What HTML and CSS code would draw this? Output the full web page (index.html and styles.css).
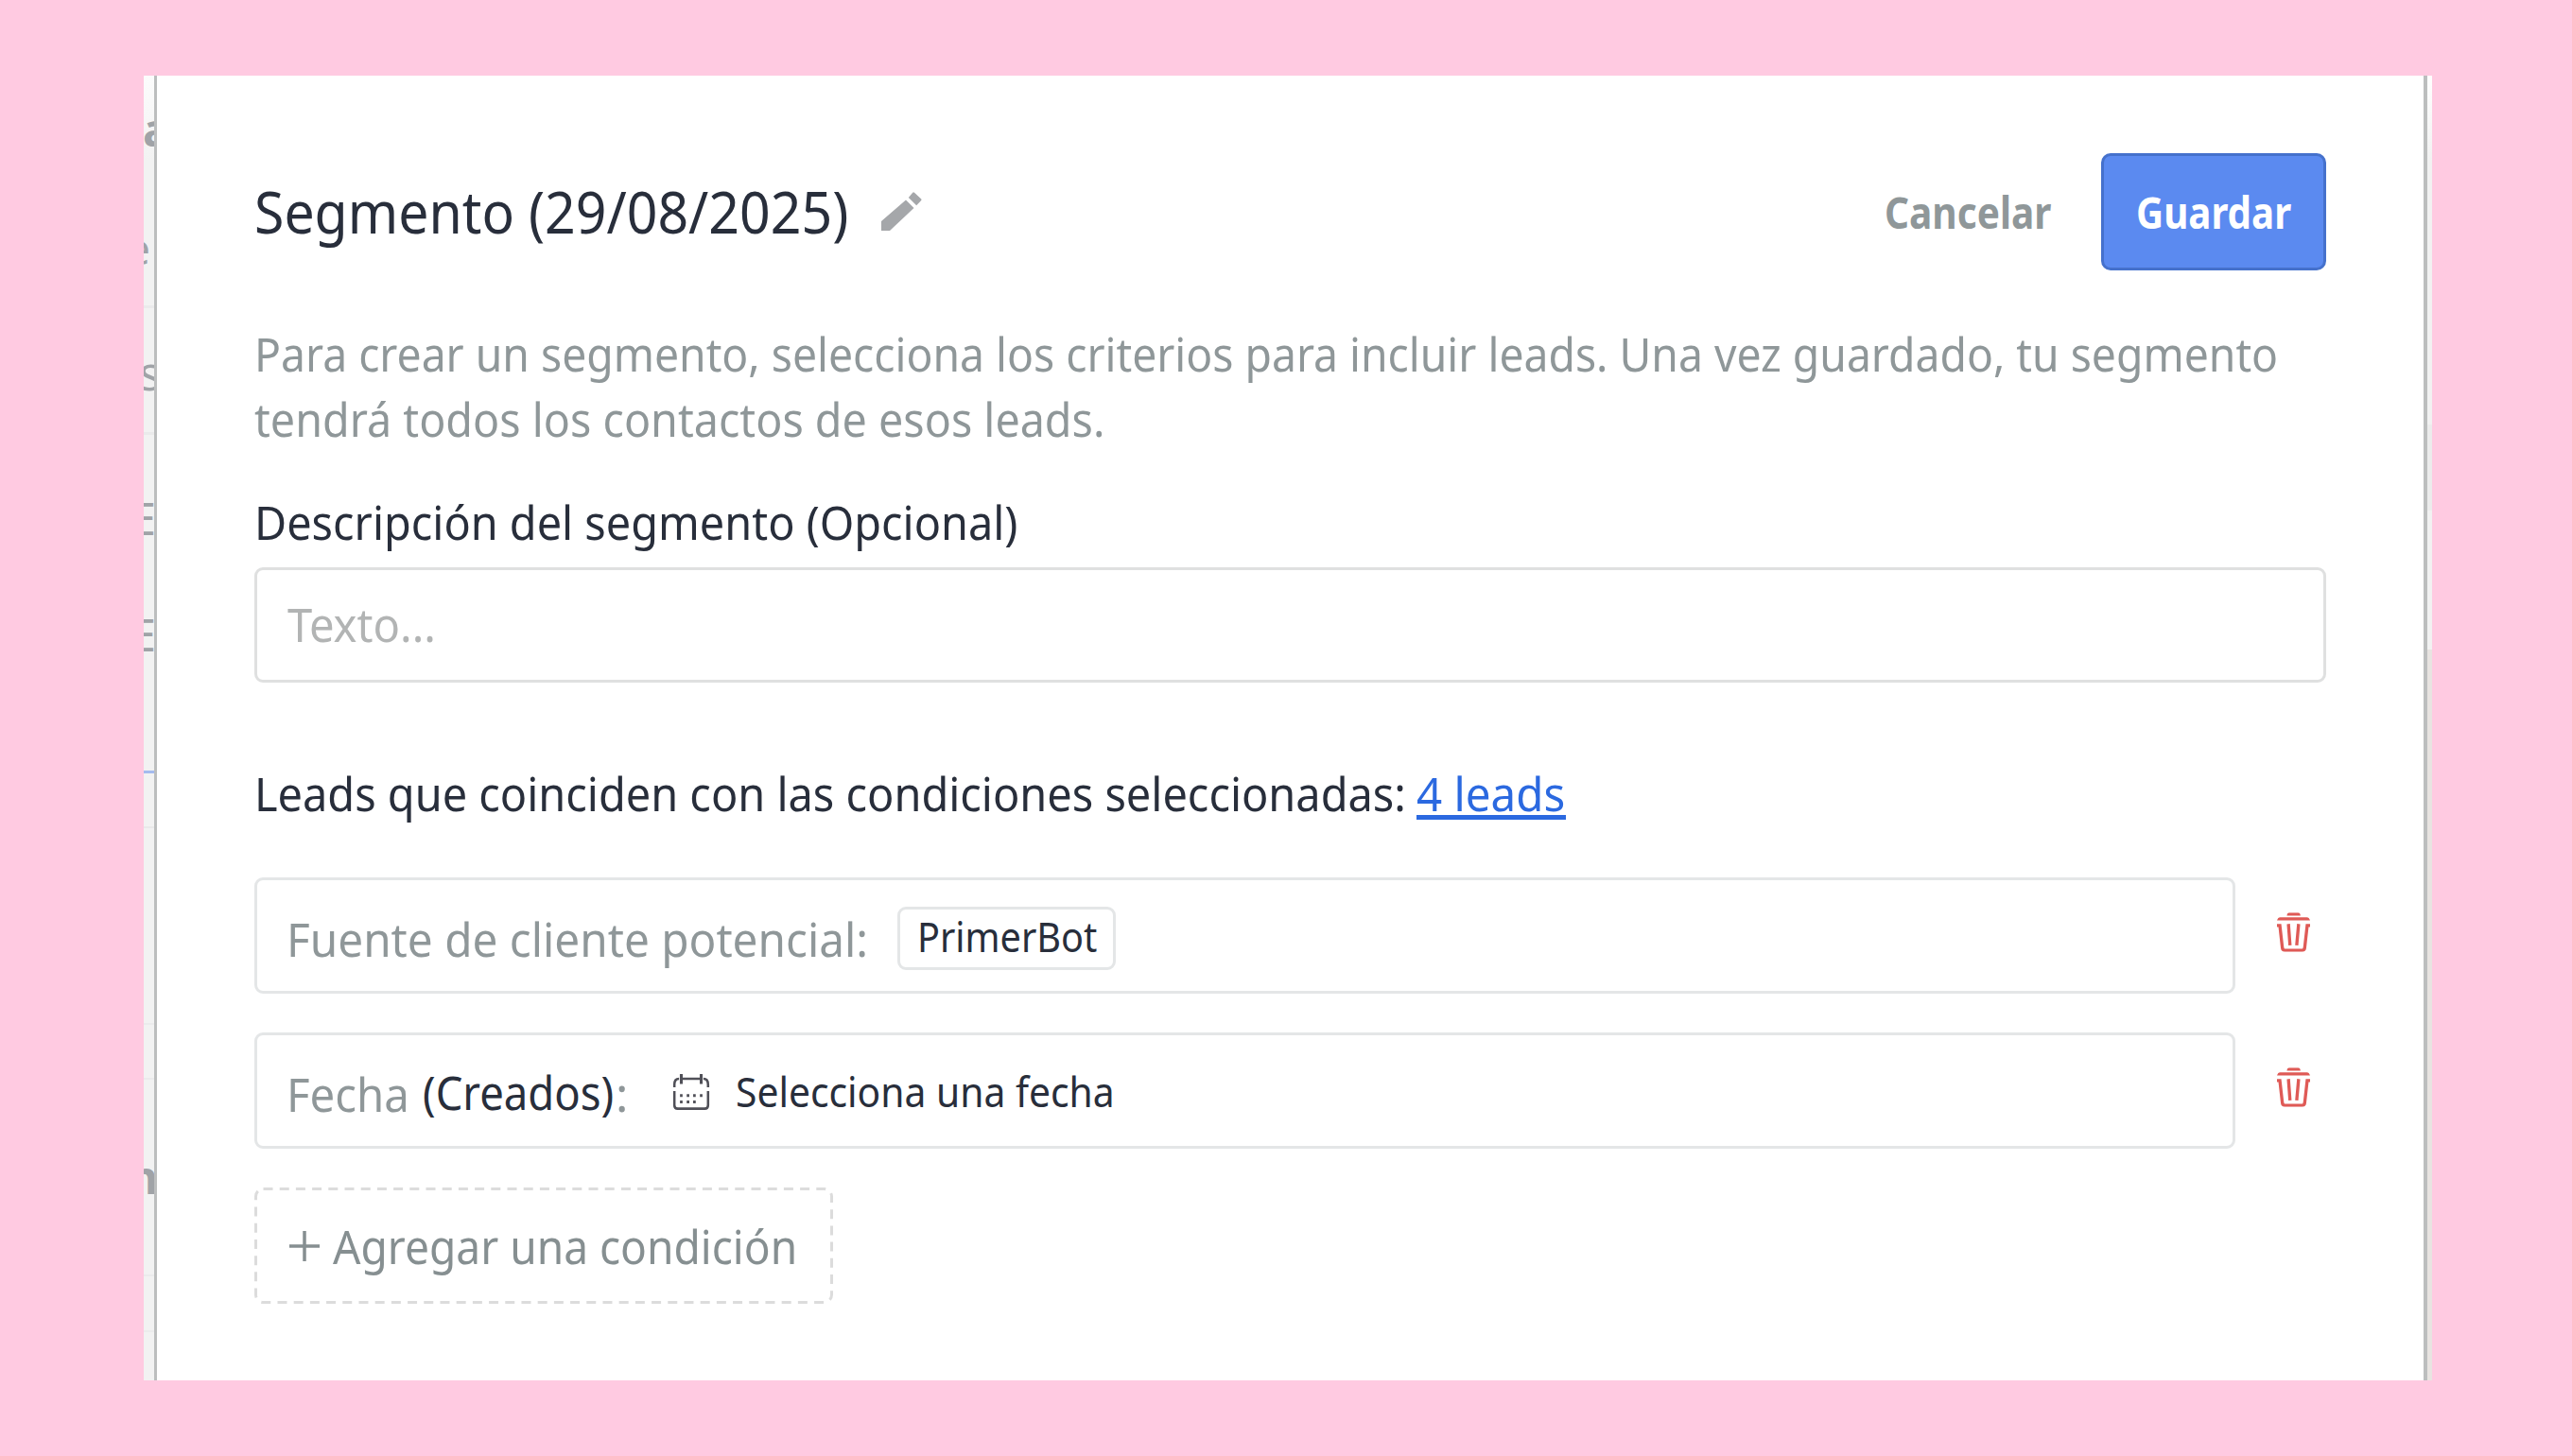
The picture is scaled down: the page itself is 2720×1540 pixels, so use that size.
FILE: index.html
```html
<!DOCTYPE html>
<html lang="es">
<head>
<meta charset="utf-8">
<title>Segmento</title>
<link rel="stylesheet" href="styles.css">
</head>
<body>
<div class="screen">
  <div class="backdrop backdrop-left">
    <span class="peek peek-a">a</span>
    <span class="peek peek-e">e</span>
    <span class="peek peek-s">s</span>
    <span class="peek peek-e1">E</span>
    <span class="peek peek-e2">E</span>
    <span class="peek peek-n">n</span>
  </div>
  <main class="modal">
    <header class="header">
      <h1 class="title"><span class="fit">Segmento (29/08/2025)</span></h1>
      <svg class="pencil" viewBox="0 0 43 41"><path d="M0 41V31L26 8.600L34.500 17L9 41ZM28.800 6L33.200.8Q34-.1 35 .8L42 7.300Q43 8.300 42 9.300L37.200 14.300Z"/></svg>
      <button class="btn cancel"><span class="fit">Cancelar</span></button>
      <button class="btn save"><span class="fit">Guardar</span></button>
    </header>
    <p class="intro"><span class="fit line1">Para crear un segmento, selecciona los criterios para incluir leads. Una vez guardado, tu segmento</span><span class="fit line2">tendrá todos los contactos de esos leads.</span></p>
    <label class="label"><span class="fit">Descripción del segmento (Opcional)</span></label>
    <div class="field"><span class="fit">Texto...</span></div>
    <div class="matches">
      <span class="matches-text"><span class="fit">Leads que coinciden con las condiciones seleccionadas:</span></span>
      <a class="link"><span class="fit">4 leads</span></a>
    </div>
    <div class="condition">
      <div class="box">
        <span class="source"><span class="fit">Fuente de cliente potencial:</span></span>
        <span class="chip"><span class="fit">PrimerBot</span></span>
      </div>
      <svg class="trash" viewBox="0 0 104 124"><use href="#trash"/></svg>
    </div>
    <div class="condition">
      <div class="box">
        <span class="date-name"><span class="fit">Fecha</span></span>
        <span class="date-kind"><span class="fit">(Creados)</span></span>
        <span class="colon">:</span>
        <svg class="calendar" viewBox="0 0 112 112"><path class="cal-line" d="M25 15H87M3.500 41V33Q3.500 15 18 15M94 15Q108.500 15 108.500 33V41M3.500 53V97Q3.500 108 14 108H98Q108.500 108 108.500 97V53"/><path class="cal-peg" d="M25 0V31M87 0V31"/><path class="cal-dots" d="M21 67h8M42 67h8M62 67h8M83 67h8M21 87h8M42 87h8M62 87h8"/></svg>
        <span class="date-pick"><span class="fit">Selecciona una fecha</span></span>
      </div>
      <svg class="trash" viewBox="0 0 104 124"><use href="#trash"/></svg>
    </div>
    <button class="add">
      <svg class="frame" viewBox="0 0 612 123"><rect x="1.500" y="1.500" width="609" height="120" rx="8"/></svg>
      <svg class="plus" viewBox="0 0 32 32"><path d="M0 16H32M16 0V32"/></svg>
      <span class="fit">Agregar una condición</span>
    </button>
  </main>
  <div class="backdrop backdrop-right"></div>
</div>
<svg class="defs">
  <symbol id="trash" viewBox="0 0 104 124"><path d="M31 10Q32 0 39 0H66Q73 0 74 10ZM0 25Q3 15 10 15H94Q101 15 104 25Z"/><path class="trash-line" d="M0 41H9L17 112Q18 119 25 119H79Q86 119 87 112L95 41H104M36 36L41 103M68 36L62 103"/></symbol>
</svg>
</body>
</html>
```
FILE: styles.css
```css
* { box-sizing: border-box; }

body {
  margin: 0;
  width: 2720px;
  height: 1540px;
  padding: 80px 148px 80px 152px;
  background: #ffcae1;
  font-family: "Noto Sans", "Open Sans", sans-serif;
  font-size: 50px;
  color: #282e3b;
  overflow: hidden;
}

.screen { display: flex; width: 2420px; height: 1380px; background: #fff; }

/* slightly condensed lettering */
.fit {
  display: inline-block;
  white-space: nowrap;
  transform-origin: 0 50%;
  transform: scaleX(.94);
}

.backdrop { flex: none; position: relative; overflow: hidden; }
.backdrop-left {
  width: 11px;
  background:
    linear-gradient(#a4bbee, #a4bbee) 0 735px / 11px 3px no-repeat,
    linear-gradient(#eaeaeb, #eaeaeb) 0 243px / 11px 3px no-repeat,
    linear-gradient(#eaeaeb, #eaeaeb) 0 377px / 11px 3px no-repeat,
    linear-gradient(#e9e9ea, #e9e9ea) 0 794px / 11px 2px no-repeat,
    linear-gradient(#ebebec, #ebebec) 0 1002px / 11px 2px no-repeat,
    linear-gradient(#ebebec, #ebebec) 0 1060px / 11px 2px no-repeat,
    linear-gradient(#ebebec, #ebebec) 0 1268px / 11px 2px no-repeat,
    linear-gradient(#ebebec, #ebebec) 0 1327px / 11px 2px no-repeat,
    linear-gradient(#fcfcfc, #f2f2f2 90px);
}
.backdrop-right {
  width: 5px;
  background: linear-gradient(#fff 0, #f2f2f2 90px, #f2f2f2 369px, #ececec 369px, #ececec 460px, #f2f2f2 460px, #f2f2f2 607px, #e8e4e1 607px);
}

.peek { position: absolute; line-height: 60px; font-size: 48px; color: #a0a3a7; }
.peek-a { left: -1px; top: 27px; font-weight: 700; }
.peek-e { right: 4px; top: 152px; font-size: 46px; }
.peek-s { left: -5px; top: 284px; font-size: 50px; }
.peek-e1 { right: -2px; top: 438px; }
.peek-e2 { right: -2px; top: 561px; }
.peek-n { right: -4px; top: 1135px; font-weight: 700; }

.modal {
  flex: 1;
  display: flex;
  flex-direction: column;
  padding: 82px 103px 0 103px;
  border-left: 3px solid #bcbebe;
  border-right: 4px solid #bcbebe;
  background: #fff;
}

.header { display: flex; align-items: center; height: 124px; }
.title {
  width: 663px;
  margin: 0 0 2px;
  font-size: 62px;
  font-weight: 400;
  line-height: 84px;
}
.title .fit { transform: scaleX(.922); }
.pencil { width: 43px; height: 41px; margin-bottom: 1px; fill: #a5a7aa; }

.btn {
  font: 700 46px/64px "Noto Sans", sans-serif;
  padding: 0 0 1px;
  border: 0;
  background: none;
  text-align: left;
}
.cancel { width: 203px; margin-left: auto; margin-right: 26px; color: #8f9799; }
.cancel .fit { transform: scaleX(.882); }
.save {
  width: 238px;
  height: 124px;
  padding-left: 34px;
  border: 3px solid #4571cc;
  border-radius: 10px;
  background: #5b8af0;
  color: #fff;
}
.save .fit { transform: scaleX(.875); }

.intro {
  display: flex;
  flex-direction: column;
  width: 2140px;
  margin: 54px 0 0 0;
  line-height: 68.700px;
  color: #8f9799;
}
.line1 { transform: scaleX(.9255); width: 0; }
.line2 { transform: scaleX(.933); }

.label { margin: 41px 0 0 0; line-height: 68px; }
.label .fit { transform: scaleX(.937); }

.field {
  height: 122px;
  margin-top: 14px;
  padding: 22px 0 0 32px;
  line-height: 70px;
  border: 3px solid #dfe0e0;
  border-radius: 9px;
  color: #b2b4b4;
}
.field .fit { transform: scaleX(.943); }

.matches { display: flex; height: 70px; margin-top: 82px; line-height: 71px; }
.matches-text { width: 1229px; }
.matches-text .fit { transform: scaleX(.938); }
.link {
  width: 158px;
  height: 63px;
  border-bottom: 5px solid #2b69e0;
  color: #2b69e0;
}
.link .fit { transform: scaleX(.95); }

.condition { display: flex; align-items: center; height: 123px; margin-top: 41px; }
.matches + .condition { margin-top: 54px; }
.box {
  display: flex;
  align-items: center;
  width: 2095px;
  height: 123px;
  border: 3px solid #e4e6e7;
  border-radius: 9px;
  line-height: 70px;
}
.source { width: 646px; margin-left: 31px; padding-top: 6px; color: #8f9799; }
.source .fit { transform: scaleX(.954); }
.chip {
  width: 231px;
  height: 67px;
  margin-top: 5px;
  padding-left: 18px;
  border: 3px solid #e4e6e7;
  border-radius: 9px;
  font-size: 44px;
  line-height: 57px;
}
.chip .fit { transform: scaleX(.9); }
.date-name { width: 144px; margin-left: 31px; padding-top: 6px; color: #8f9799; }
.date-name .fit { transform: scaleX(.947); }
.date-kind { width: 204px; padding-top: 3px; }
.date-kind .fit { transform: scaleX(.909); }
.colon { width: 61px; padding-top: 6px; color: #8f9799; }
.calendar { width: 38px; height: 38px; margin-top: 3px; overflow: visible; fill: none; stroke: #505058; }
.cal-line { stroke-width: 7.500; }
.cal-peg, .cal-dots { stroke-width: 9; }
.date-pick { margin-left: 28px; font-size: 44px; }
.date-pick .fit { transform: scaleX(.927); }

.trash { width: 35px; height: 42px; margin: 0 0 7px 44px; fill: #df5a56; }
.trash-line { fill: none; stroke: #df5a56; stroke-width: 10; }
.defs { display: none; }

.add {
  position: relative;
  display: flex;
  align-items: center;
  width: 612px;
  height: 123px;
  margin-top: 41px;
  padding: 0 0 0 37px;
  border: 0;
  background: none;
  font: 400 50px/70px "Noto Sans", sans-serif;
  color: #868f91;
}
.add .fit { margin-left: 14px; transform: scaleX(.922); }
.frame { position: absolute; inset: 0; fill: none; stroke: #dcdcdc; stroke-width: 3; stroke-dasharray: 10 7.200; }
.plus { flex: none; width: 32px; height: 32px; fill: none; stroke: #868f91; stroke-width: 3.500; }
```
